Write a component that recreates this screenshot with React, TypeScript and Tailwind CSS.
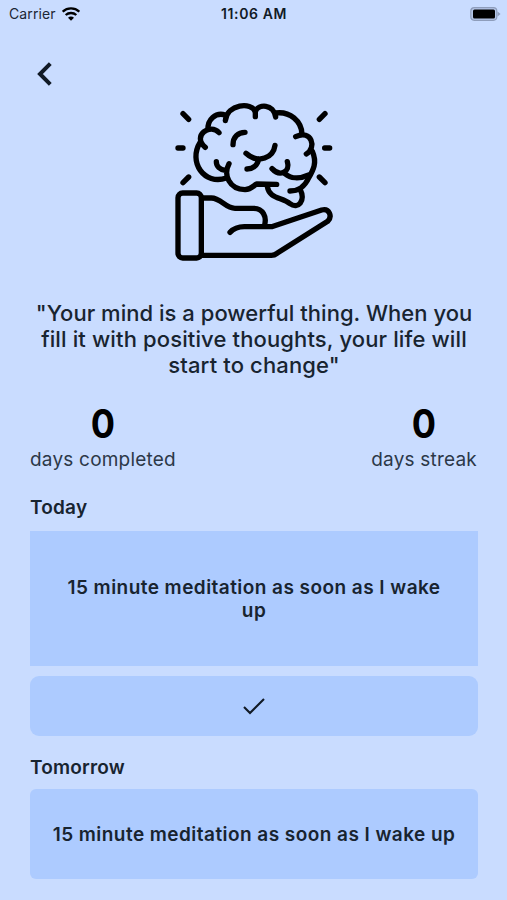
import type { ReactNode } from 'react'

const HABIT = '15 minute meditation as soon as I wake up'

function StatusBar() {
  return (
    <header className="relative flex h-7 items-center justify-between pr-[6px] pl-[9px] text-sm text-[#1c2634]">
      <div className="flex items-center gap-[6px]">
        <span className="tracking-[0.1px]">Carrier</span>
        <svg className="h-[14px] w-[18px]" viewBox="0 0 54 42" fill="none" stroke="#000" strokeWidth="7">
          <path d="M2 14C16 1 38 1 52 14" />
          <path d="M11 24C20 16 34 16 43 24" />
          <path d="M18 32C23 27 31 27 36 32L27 41Z" fill="#000" stroke="none" />
        </svg>
      </div>
      <span className="absolute inset-x-0 pl-px text-center font-semibold tracking-[0.6px] text-[#111a26]">11:06 AM</span>
      <svg className="h-[14px] w-[31px]" viewBox="0 0 31 14">
        <rect x="0.8" y="0.7" width="26" height="12.6" rx="3.5" fill="#b5c6e8" stroke="#8e9dbb" strokeWidth="1.2" />
        <rect x="3" y="2.5" width="22" height="9" rx="1.5" fill="#000" />
        <path d="M27.5 4.5L30.5 7L27.5 9.5Z" fill="#8e9dbb" />
      </svg>
    </header>
  )
}

function MindIcon() {
  return (
    <svg
      className="ml-[135px] block h-[180px] w-[180px]"
      viewBox="0 0 540 540"
      fill="none"
      stroke="#000"
      strokeWidth="16"
      strokeLinecap="round"
      strokeLinejoin="round"
    >
      {/* rays */}
      <path d="M54 56L71 73M39 159H54M71 246L54 263M480 56L463 73M479 159H494M463 246L480 263" />

      {/* brain outline */}
      <path d="M181 77C186 27 260 20 271 50V65" />
      <path d="M271 50C280 26 326 26 332 66" />
      <path d="M332 54C374 48 410 78 411 118" />
      <path d="M392 125C440 102 456 158 424 177" />
      <path d="M442 169C457 203 445 225 431 249C420 273 400 288 375 288" />
      <path d="M360 236C376 250 402 253 431 240" />
      <path d="M181 60C151 51 127 74 129 104" />
      <path d="M162 113C137 83 79 122 121 157" />
      <path d="M106 141C68 201 118 272 184 249" />
      <path d="M154 200C154 214 165 224 181 226M192 206C174 240 193 283 240 284C260 283 266 271 275 267L335 268" />

      {/* folds */}
      <path d="M204 149C204 126 219 112 240 112" />
      <path d="M243 175C281 209 325 187 330 151M281 192C278 210 264 222 246 222" />
      <path d="M321 221C344 246 377 232 367 200" />

      {/* stem */}
      <path d="M307 275C313 312 352 306 375 326C399 344 423 318 405 282" />

      {/* hand and sleeve */}
      <rect x="39" y="294" width="70" height="195" rx="14" />
      <path d="M112 309H139C168 309 181 340 210 340H266C293 340 307 365 298 393" />
      <path d="M195 412C208 398 221 395 238 395H320L470 345C493 339 503 364 488 379L336 475C331 479 325 481 319 481H112" />
    </svg>
  )
}

function Stat({ value, label }: { value: number; label: string }) {
  return (
    <div className="text-center">
      <p className="scale-x-90 text-[40px] leading-[42px] font-bold text-black">{value}</p>
      <p className="mt-[3px] text-[19px] leading-6 tracking-[0.2px] text-[#2c3848]">{label}</p>
    </div>
  )
}

function SectionTitle({ children }: { children: ReactNode }) {
  return <h2 className="text-[19px] leading-6 font-semibold tracking-[0.2px]">{children}</h2>
}

export default function App() {
  return (
    <div className="h-[900px] w-[507px] overflow-hidden bg-[#c9dcff] font-['Inter',sans-serif] text-[#182430]">
      <StatusBar />

      <main className="pr-[29px] pl-[30px]">
        <div className="h-[67px] pt-[34px] pl-[7px]">
          <button className="block" aria-label="Back">
            <svg className="h-6 w-[15px]" viewBox="0 0 15 24" fill="none" stroke="#111a26" strokeWidth="4">
              <path d="M13.3 1.7L3 12L13.3 22.3" />
            </svg>
          </button>
        </div>

        <MindIcon />

        <p className="mt-[25px] text-center text-[22px] leading-[26px] font-medium tracking-[0.13px]">
          <span className="tracking-[0.03px]">"Your mind is a powerful thing. When you</span>
          <br />
          fill it with positive thoughts, your life will
          <br />
          start to change"
        </p>

        <div className="mt-[25px] flex justify-between pr-px">
          <Stat value={0} label="days completed" />
          <Stat value={0} label="days streak" />
        </div>

        <section className="mt-6">
          <SectionTitle>Today</SectionTitle>
          <div className="mt-[11px] flex h-[135px] items-center justify-center bg-[#adcbff] px-7 text-center text-[19px] leading-[23px] font-semibold tracking-[0.45px]">
            {HABIT}
          </div>
          <button className="mt-[10px] flex h-[60px] w-full items-center justify-center rounded-[9px] bg-[#adcbff]" aria-label="Mark as done">
            <svg className="h-[17px] w-[22px]" viewBox="0 0 22 17" fill="none" stroke="#111a26" strokeWidth="2.1">
              <path d="M1 9L7 15L21 1" />
            </svg>
          </button>
        </section>

        <section className="mt-5">
          <SectionTitle>Tomorrow</SectionTitle>
          <div className="mt-[9px] flex h-[90px] items-center justify-center rounded-md bg-[#adcbff] text-center text-[19px] leading-[23px] font-semibold tracking-[0.45px]">
            {HABIT}
          </div>
        </section>
      </main>
    </div>
  )
}
